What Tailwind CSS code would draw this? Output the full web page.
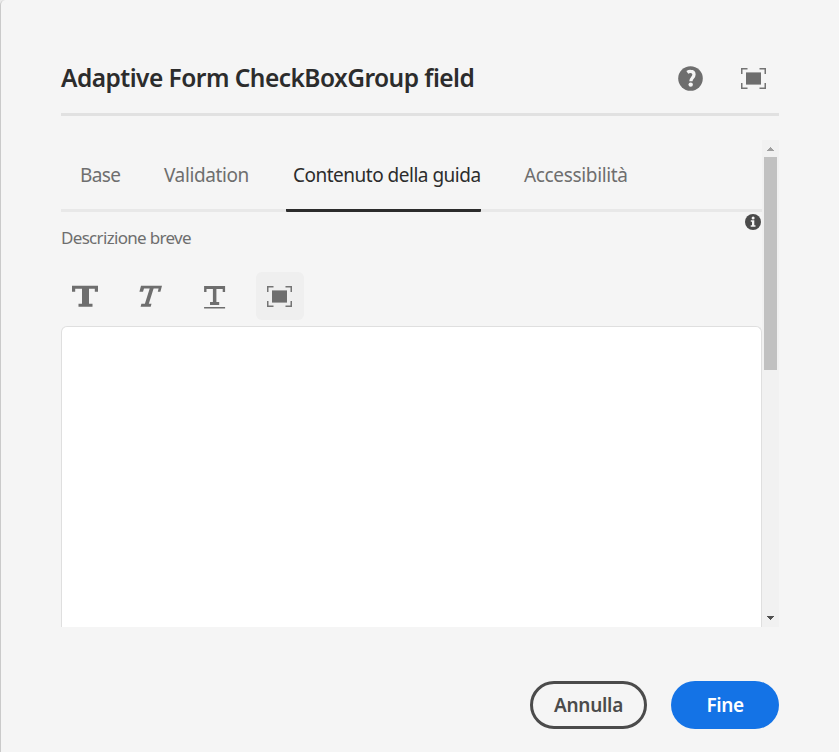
<!DOCTYPE html>
<html lang="it">
<head>
<meta charset="utf-8">
<title>Adaptive Form CheckBoxGroup field</title>
<script src="https://cdn.jsdelivr.net/npm/@tailwindcss/browser@4"></script>
</head>
<body class="bg-[#eaeaea]">
<main class="flex h-[752px] w-[839px] flex-col overflow-hidden rounded-tl-[5px] border-l border-[#cacaca] bg-[#f5f5f5] pr-[60px] pl-[60px] font-['Noto_Sans','Open_Sans',sans-serif] text-[#6e6e6e]">
  <header class="flex h-[116px] shrink-0 items-start border-b-[3px] border-[#e1e1e1] pt-[60px]">
    <h1 class="flex-1 text-[24.5px] leading-[36px] font-semibold tracking-[-0.54px] whitespace-nowrap text-[#2c2c2c]">Adaptive Form CheckBoxGroup field</h1>
    <div class="flex items-center gap-[38px] pt-[6px] pr-[13px]">
      <svg class="size-[25px]" viewBox="0 0 25 25"><circle cx="12.5" cy="12.5" r="12.3" fill="#6e6e6e"/><path d="M9.300 6.400Q11 5.200 12.600 5.300c2.300 0 3.400 1.400 3.400 3.200 0 3-3.100 3.500-3.100 6.800" fill="none" stroke="#f5f5f5" stroke-width="3.300"/><circle cx="12.700" cy="18.600" r="2.200" fill="#f5f5f5"/></svg>
      <svg class="h-[25px] w-[25px]" viewBox="0 0 25 25"><path d="M.75 8V2.750H6.500M18.500 2.750h5.750V8M.75 17v5.250H6.500M18.500 22.250h5.750V17" fill="none" stroke="#747474" stroke-width="1.500"/><path d="M5 6.400h15v12.200H5z" fill="#6e6e6e"/></svg>
    </div>
  </header>
  <div class="mt-6 flex h-[487px] shrink-0">
    <section class="flex w-[701px] flex-col overflow-hidden">
      <nav class="flex h-[72px] shrink-0 border-b-[3px] border-[#e8e8e8] pl-[12px] text-[19px] leading-[70px]">
        <a class="h-[72px] w-[84px] pl-[7px] tracking-[-0.6px]">Base</a>
        <a class="h-[72px] w-[129px] pl-[7px] tracking-[-0.4px]">Validation</a>
        <a class="h-[72px] w-[195px] rounded-[1px] border-b-[3px] border-[#2c2c2c] pl-[7px] tracking-[-0.5px] whitespace-nowrap text-[#2c2c2c]">Contenuto della guida</a>
        <a class="h-[72px] pl-[43px] tracking-[-0.34px]">Accessibilità</a>
      </nav>
      <div class="flex h-[60px] shrink-0 justify-between">
        <label class="pt-[14px] text-[17px] leading-6 tracking-[-0.68px]">Descrizione breve</label>
        <svg class="mt-[1.5px] mr-[1px] size-4" viewBox="0 0 16 16"><circle cx="8" cy="8" r="8" fill="#4b4b4b"/><circle cx="8.100" cy="3.900" r="1.500" fill="#f5f5f5"/><path d="M5.800 6.300h3.500v5h1.200v1.500H5.700v-1.500H7V7.800H5.800z" fill="#f5f5f5"/></svg>
      </div>
      <div class="flex h-[54px] shrink-0 gap-[17px]">
        <button class="flex size-12 items-center justify-center"><svg class="size-[26px]" viewBox="0 0 26 26" fill="#6e6e6e"><path d="M0 3h26v6h-3.200V6H17v15h3.500v3h-14v-3H10V6H3.200v3H0z" transform="translate(0 -.3)"/></svg></button>
        <button class="flex size-12 items-center justify-center"><svg class="size-[26px]" viewBox="0 0 26 26" fill="#6e6e6e"><path d="M4 3h21l-1.600 6h-2.600l.8-3.200h-5L11.800 21h2.700l-.8 3H3.600l.8-3h3.500L12.700 5.800H7L6 9H2.400z" transform="translate(0 -.3)"/></svg></button>
        <button class="flex size-12 items-center justify-center"><svg class="size-[26px]" viewBox="0 0 26 26" fill="#6e6e6e"><path d="M2.100 3h21v6h-2.400V5.900h-6.300v13h2.800v3H8v-3h2.900v-13H4.500V9H2.100zM2.100 24h21v1.600h-21z"/></svg></button>
        <button class="flex size-12 items-center justify-center rounded-[6px] bg-[#efefef] pr-px"><svg class="size-[25px]" viewBox="0 0 25 25"><path d="M.75 8V2.750H6.500M18.500 2.750h5.750V8M.75 17v5.250H6.500M18.500 22.250h5.750V17" fill="none" stroke="#747474" stroke-width="1.500"/><path d="M5 6.400h15v12.200H5z" fill="#6e6e6e"/></svg></button>
      </div>
      <div class="flex-1 rounded-t-[6px] border border-b-0 border-[#dfdfdf] bg-white"></div>
    </section>
    <div class="flex w-[17px] shrink-0 flex-col items-center bg-[#f1f1f1]">
      <svg class="h-[17px] w-[17px] shrink-0" viewBox="0 0 17 17" shape-rendering="crispEdges"><path d="M8 7h1v1h1v1h1v1h1v1H5v-1h1V9h1V8h1z" fill="#a0a0a0"/></svg>
      <div class="h-[213px] w-[13px] bg-[#c1c1c1]"></div>
      <svg class="mt-auto h-[17px] w-[17px] shrink-0" viewBox="0 0 17 17" shape-rendering="crispEdges"><path d="M5 6h7v1h-1v1h-1v1H9v1H8V9H7V8H6V7H5z" fill="#505050"/></svg>
    </div>
  </div>
  <footer class="flex justify-end gap-6 pt-[54px] text-[19px] font-semibold">
    <button class="h-12 w-[117px] rounded-full border-[3px] border-[#4b4b4b] tracking-[-0.3px] text-[#4b4b4b]">Annulla</button>
    <button class="h-12 w-[108px] rounded-full bg-[#1473e6] tracking-[-0.4px] text-white">Fine</button>
  </footer>
</main>
</body>
</html>
